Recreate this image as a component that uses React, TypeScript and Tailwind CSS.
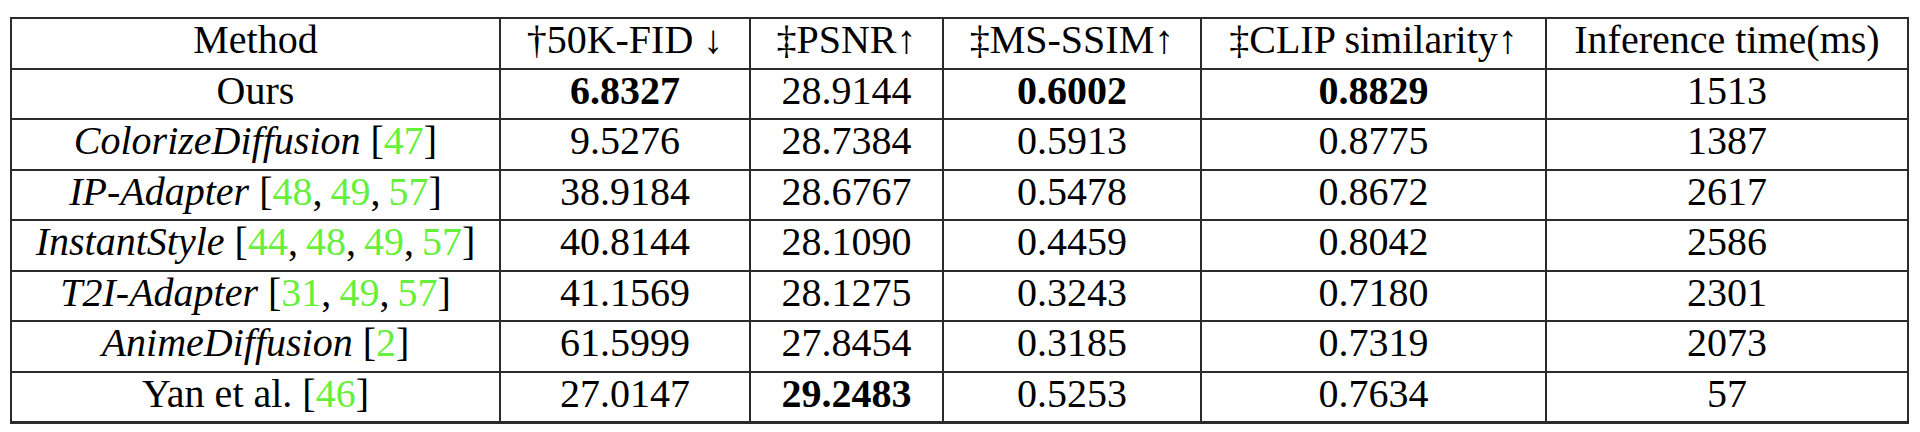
import React from "react";

type Cell = { text: string; bold?: boolean };
type Row = {
  name: string;
  italic?: boolean;
  refs: string[];
  cells: Cell[];
};

const rows: Row[] = [
  {
    name: "Ours",
    refs: [],
    cells: [
      { text: "6.8327", bold: true },
      { text: "28.9144" },
      { text: "0.6002", bold: true },
      { text: "0.8829", bold: true },
      { text: "1513" },
    ],
  },
  {
    name: "ColorizeDiffusion",
    italic: true,
    refs: ["47"],
    cells: [{ text: "9.5276" }, { text: "28.7384" }, { text: "0.5913" }, { text: "0.8775" }, { text: "1387" }],
  },
  {
    name: "IP-Adapter",
    italic: true,
    refs: ["48", "49", "57"],
    cells: [{ text: "38.9184" }, { text: "28.6767" }, { text: "0.5478" }, { text: "0.8672" }, { text: "2617" }],
  },
  {
    name: "InstantStyle",
    italic: true,
    refs: ["44", "48", "49", "57"],
    cells: [{ text: "40.8144" }, { text: "28.1090" }, { text: "0.4459" }, { text: "0.8042" }, { text: "2586" }],
  },
  {
    name: "T2I-Adapter",
    italic: true,
    refs: ["31", "49", "57"],
    cells: [{ text: "41.1569" }, { text: "28.1275" }, { text: "0.3243" }, { text: "0.7180" }, { text: "2301" }],
  },
  {
    name: "AnimeDiffusion",
    italic: true,
    refs: ["2"],
    cells: [{ text: "61.5999" }, { text: "27.8454" }, { text: "0.3185" }, { text: "0.7319" }, { text: "2073" }],
  },
  {
    name: "Yan et al.",
    refs: ["46"],
    cells: [{ text: "27.0147" }, { text: "29.2483", bold: true }, { text: "0.5253" }, { text: "0.7634" }, { text: "57" }],
  },
];

const headers = ["Method", "†50K-FID ↓", "‡PSNR↑", "‡MS-SSIM↑", "‡CLIP similarity↑", "Inference time(ms)"];
const widths = ["w-[489px]", "w-[250px]", "w-[193px]", "w-[258px]", "w-[345px]", "w-[362px]"];

// citation list, green numbers like hyperref links
function Refs({ refs }: { refs: string[] }) {
  if (refs.length === 0) return null;
  return (
    <>
      {" "}[
      {refs.map((r, i) => (
        <React.Fragment key={r}>
          {i > 0 && ",\u2009"}
          <span className="text-[#66f03c]">{r}</span>
        </React.Fragment>
      ))}
      ]
    </>
  );
}

const cellBase = "border-2 border-[#2b2b2b] text-center align-top p-0 pt-[1px] whitespace-nowrap";

export default function App() {
  return (
    <div className="w-[1920px] h-[432px] bg-white pt-[17px] pl-[10px] font-['Liberation_Serif','Times_New_Roman',serif] text-black">
      <table className="border-collapse border-2 border-b-[3px] border-[#2b2b2b] text-[40px] leading-[40px]">
        <thead>
          <tr className="h-[50.5px]">
            {headers.map((h, i) => (
              <th key={h} className={`${widths[i]} ${cellBase} font-normal`}>
                {h}
              </th>
            ))}
          </tr>
        </thead>
        <tbody>
          {rows.map((row) => (
            <tr key={row.name} className="h-[50.5px]">
              <td className={cellBase}>
                <span className={row.italic ? "italic" : ""}>{row.name}</span>
                <Refs refs={row.refs} />
              </td>
              {row.cells.map((c, i) => (
                <td key={i} className={`${cellBase} ${c.bold ? "font-bold" : ""}`}>
                  {c.text}
                </td>
              ))}
            </tr>
          ))}
        </tbody>
      </table>
    </div>
  );
}
